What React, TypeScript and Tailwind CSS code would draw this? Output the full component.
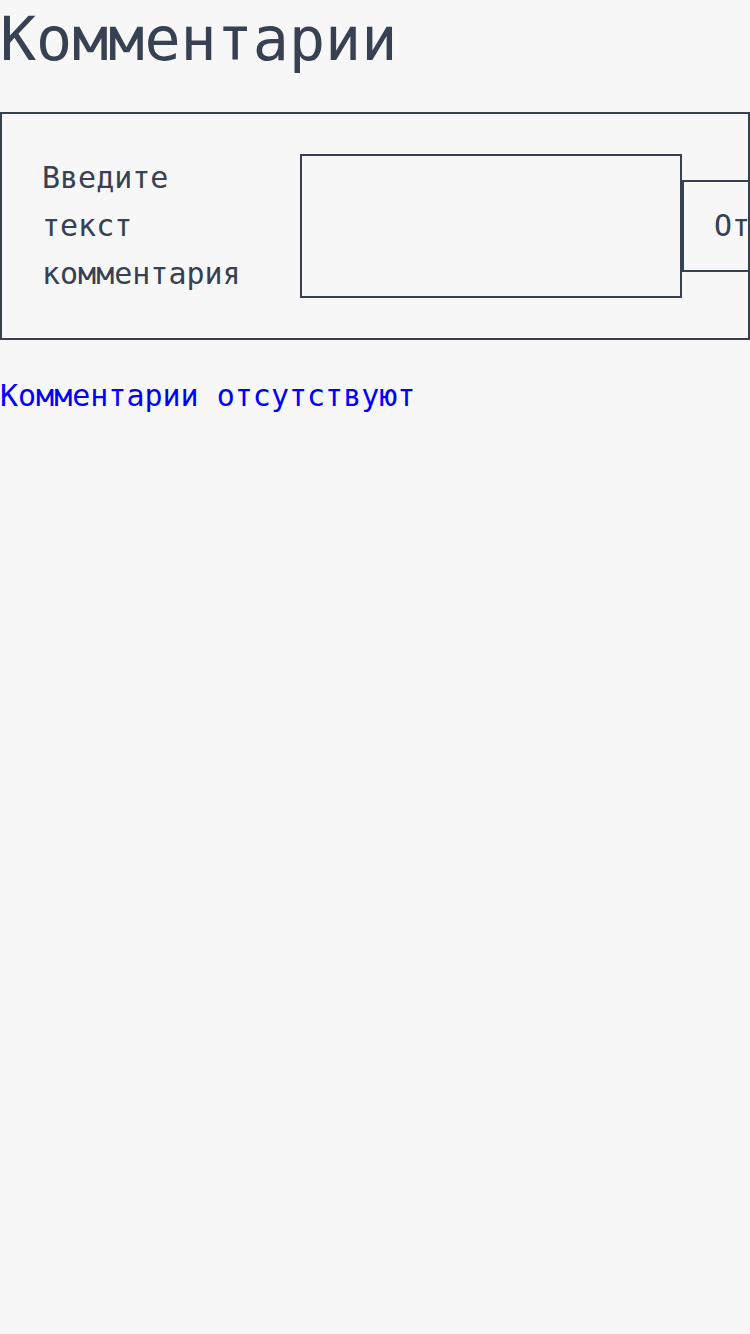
import React, { useState } from 'react';

const App: React.FC = () => {
  const [text, setText] = useState('');

  return (
    <div className="min-h-[1334px] w-[750px] bg-[#f7f7f7] font-['DejaVu_Sans_Mono',monospace] text-[#374151]">
      <h1 className="mb-[34px] text-[60px] font-normal leading-[78px]">Комментарии</h1>

      <form
        onSubmit={(e) => e.preventDefault()}
        className="flex items-center overflow-hidden border-2 border-[#374151] p-[40px]"
      >
        <label htmlFor="comment" className="w-[258px] shrink-0 pr-[40px] text-[30px] leading-[48px]">
          Введите текст комментария
        </label>
        <textarea
          id="comment"
          value={text}
          onChange={(e) => setText(e.target.value)}
          className="h-[144px] w-[382px] shrink-0 resize-none border-2 border-[#374151] bg-transparent outline-none"
        />
        <button
          type="submit"
          className="shrink-0 whitespace-nowrap border-2 border-[#374151] px-[30px] py-[20px] text-[30px] leading-[48px]"
        >
          Отправить
        </button>
      </form>

      <p className="mt-[32px] text-[30px] leading-[48px] text-[#0000ff]">Комментарии отсутствуют</p>
    </div>
  );
};

export default App;
